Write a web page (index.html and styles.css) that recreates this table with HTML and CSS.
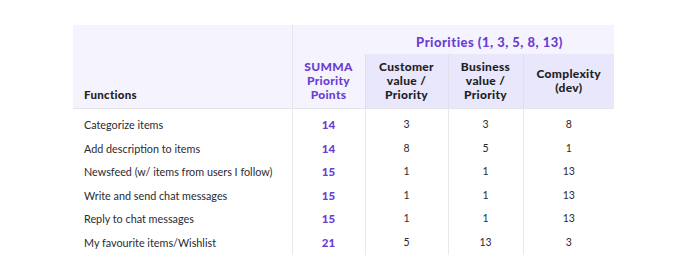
FILE: index.html
```html
<!DOCTYPE html>
<html lang="en">
<head>
<meta charset="utf-8">
<title>Priorities</title>
<link rel="stylesheet" href="styles.css">
</head>
<body>
<div class="page">
  <table class="prio">
    <colgroup>
      <col class="c-fn"><col class="c-sum"><col class="c-cust"><col class="c-bus"><col class="c-cplx">
    </colgroup>
    <thead>
      <tr class="band">
        <th class="fn" rowspan="2">Functions</th>
        <th class="sum" rowspan="2">SUMMA<br>Priority<br>Points</th>
        <th class="group" colspan="3">Priorities (1, 3, 5, 8, 13)</th>
      </tr>
      <tr class="sub">
        <th>Customer<br>value /<br>Priority</th>
        <th>Business<br>value /<br>Priority</th>
        <th>Complexity<br>(dev)</th>
      </tr>
    </thead>
    <tbody>
      <tr class="first"><td>Categorize items</td><td class="pts">14</td><td>3</td><td>3</td><td>8</td></tr>
      <tr><td>Add description to items</td><td class="pts">14</td><td>8</td><td>5</td><td>1</td></tr>
      <tr><td>Newsfeed (w/ items from users I follow)</td><td class="pts">15</td><td>1</td><td>1</td><td>13</td></tr>
      <tr><td>Write and send chat messages</td><td class="pts">15</td><td>1</td><td>1</td><td>13</td></tr>
      <tr><td>Reply to chat messages</td><td class="pts">15</td><td>1</td><td>1</td><td>13</td></tr>
      <tr class="last"><td>My favourite items/Wishlist</td><td class="pts">21</td><td>5</td><td>13</td><td>3</td></tr>
    </tbody>
  </table>
</div>
</body>
</html>
```
FILE: styles.css
```css
html, body {
  margin: 0;
  background: #ffffff;
}
.page {
  padding: 25px 0 0 73px;
}
.prio {
  border-collapse: collapse;
  table-layout: fixed;
  width: 541px;
  font-family: Lato, "Liberation Sans", sans-serif;
  color: #1f1f24;
}
.c-fn { width: 219px; }
.c-sum { width: 73px; }
.c-cust { width: 83px; }
.c-bus { width: 75px; }
.c-cplx { width: 91px; }

.prio th {
  font-weight: 900;
  font-size: 12px;
  letter-spacing: 0.3px;
  line-height: 14px;
  padding: 0;
  text-align: center;
}
.prio th.fn {
  background: #f5f4fe;
  text-align: left;
  vertical-align: bottom;
  padding: 0 0 6px 11px;
  border-right: 1px solid #e6e5ee;
  border-bottom: 1px solid #e4e3ea;
  font-size: 11.5px;
}
.prio th.sum {
  background: #f5f4fe;
  color: #6b3ed3;
  vertical-align: bottom;
  padding: 0 0 6px;
  border-bottom: 1px solid #e4e3ea;
}
.band th.group {
  background: #f5f4fe;
  color: #6b3ed3;
  font-size: 13px;
  letter-spacing: 0.5px;
  height: 24px;
  line-height: 16px;
  padding: 5px 0 0;
}
.sub th {
  background: #e8e7fb;
  height: 54px;
  vertical-align: middle;
  border-left: 1px solid #e0dfee;
  border-bottom: 1px solid #e4e3ea;
}
.prio td {
  font-size: 10.5px;
  height: 23.6px;
  line-height: 23.6px;
  padding: 0;
  text-align: center;
  border-left: 1px solid #e8e8ee;
  vertical-align: middle;
  white-space: nowrap;
  color: #2a2a30;
}
.prio td:first-child {
  text-align: left;
  padding-left: 11px;
  border-left: none;
  border-right: 1px solid #e8e8ee;
  font-size: 10.8px;
}
.prio td.pts {
  color: #6b3ed3;
  font-weight: 900;
  font-size: 11.5px;
  border-left: none;
}
.prio tr.first td {
  padding-top: 4px;
}
```
